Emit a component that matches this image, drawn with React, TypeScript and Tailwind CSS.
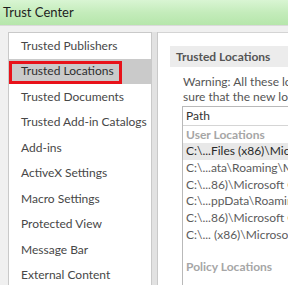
import React from 'react'

const leftItems = [
  'Trusted Publishers',
  'Trusted Locations',
  'Trusted Documents',
  'Trusted Add-in Catalogs',
  'Add-ins',
  'ActiveX Settings',
  'Macro Settings',
  'Protected View',
  'Message Bar',
  'External Content'
]

const userRows = [
  'C:\\...Files (x86)\\Microsoft Office\\root\\Templates\\',
  'C:\\...ata\\Roaming\\Microsoft\\Templates\\',
  'C:\\...86)\\Microsoft Office\\root\\Office16\\STARTUP\\',
  'C:\\...ppData\\Roaming\\Microsoft\\Word\\Startup\\',
  'C:\\...86)\\Microsoft Office\\root\\Templates\\',
  'C:\\... (x86)\\Microsoft Office\\root\\Office16\\'
]

const App: React.FC = () => {
  return (
    <div
      className="w-[288px] h-[285px] overflow-hidden bg-[#f0f0f0] flex flex-col"
      style={{ fontFamily: 'Lato, "Open Sans", sans-serif' }}
    >
      {/* window title */}
      <div className="h-[25px] shrink-0 bg-gradient-to-b from-[#d9f5d3] via-[#c4ecbb] to-[#b6e6ab] flex items-center px-[3px]">
        <span className="text-[13px] text-[#1e1e1e]">Trust Center</span>
      </div>

      <div className="flex-1 flex border-t border-[#dadada] pl-[8px] pt-[6px] min-h-0">
        {/* left nav */}
        <div className="w-[144px] shrink-0 bg-white border border-[#c9c9c9] border-b-0">
          {leftItems.map((item, i) => (
            <div
              key={item}
              className={`relative h-[25.5px] flex items-center pl-[12px] text-[12px] whitespace-nowrap ${
                i === 1 ? 'bg-[#cacaca] text-[#2e2e2e]' : 'text-[#474747]'
              }`}
            >
              {item}
              {i === 1 && (
                <div className="absolute left-0 top-[2px] w-[113px] h-[23px] border-[3px] border-[#e8121a]" />
              )}
            </div>
          ))}
        </div>

        {/* splitter */}
        <div className="w-[6px] shrink-0 bg-[#e2e2e2] border-r border-[#c9c9c9]" />

        {/* right pane */}
        <div className="flex-1 bg-white border-t border-[#d4d4d4] pl-[12px] pt-[13px] min-w-0 overflow-hidden">
          <div className="h-[21px] bg-[#ececec] flex items-center pl-[6px] text-[12px] font-bold text-[#555] whitespace-nowrap">
            Trusted Locations
          </div>
          <div className="pl-[13px] pt-[7px] text-[12px] leading-[15px] text-[#555] whitespace-nowrap">
            <div>Warning: All these locations are treated as trusted sources for opening files.</div>
            <div>sure that the new location is secure.</div>
          </div>
          <div className="ml-[12px] mt-[2px] border border-[#b9b9b9] border-r-0 border-b-0 h-[200px] bg-white whitespace-nowrap text-[12px]">
            <div className="h-[19px] flex items-center pl-[3px] border-b border-[#d5d5d5] text-[#333]">
              Path
            </div>
            <div className="h-[17px] flex items-center pl-[3px] font-bold text-[#a6a6a6]">
              User Locations
            </div>
            {userRows.map((row, i) => (
              <div
                key={i}
                className={`h-[16.7px] flex items-center pl-[3px] ${
                  i === 0 ? 'bg-[#e8e8e8] text-[#2a2a2a]' : 'text-[#5c5c5c]'
                }`}
              >
                {row}
              </div>
            ))}
            <div className="h-[15px]" />
            <div className="h-[17px] flex items-center pl-[3px] font-bold text-[#a6a6a6]">
              Policy Locations
            </div>
          </div>
        </div>
      </div>
    </div>
  )
}

export default App
